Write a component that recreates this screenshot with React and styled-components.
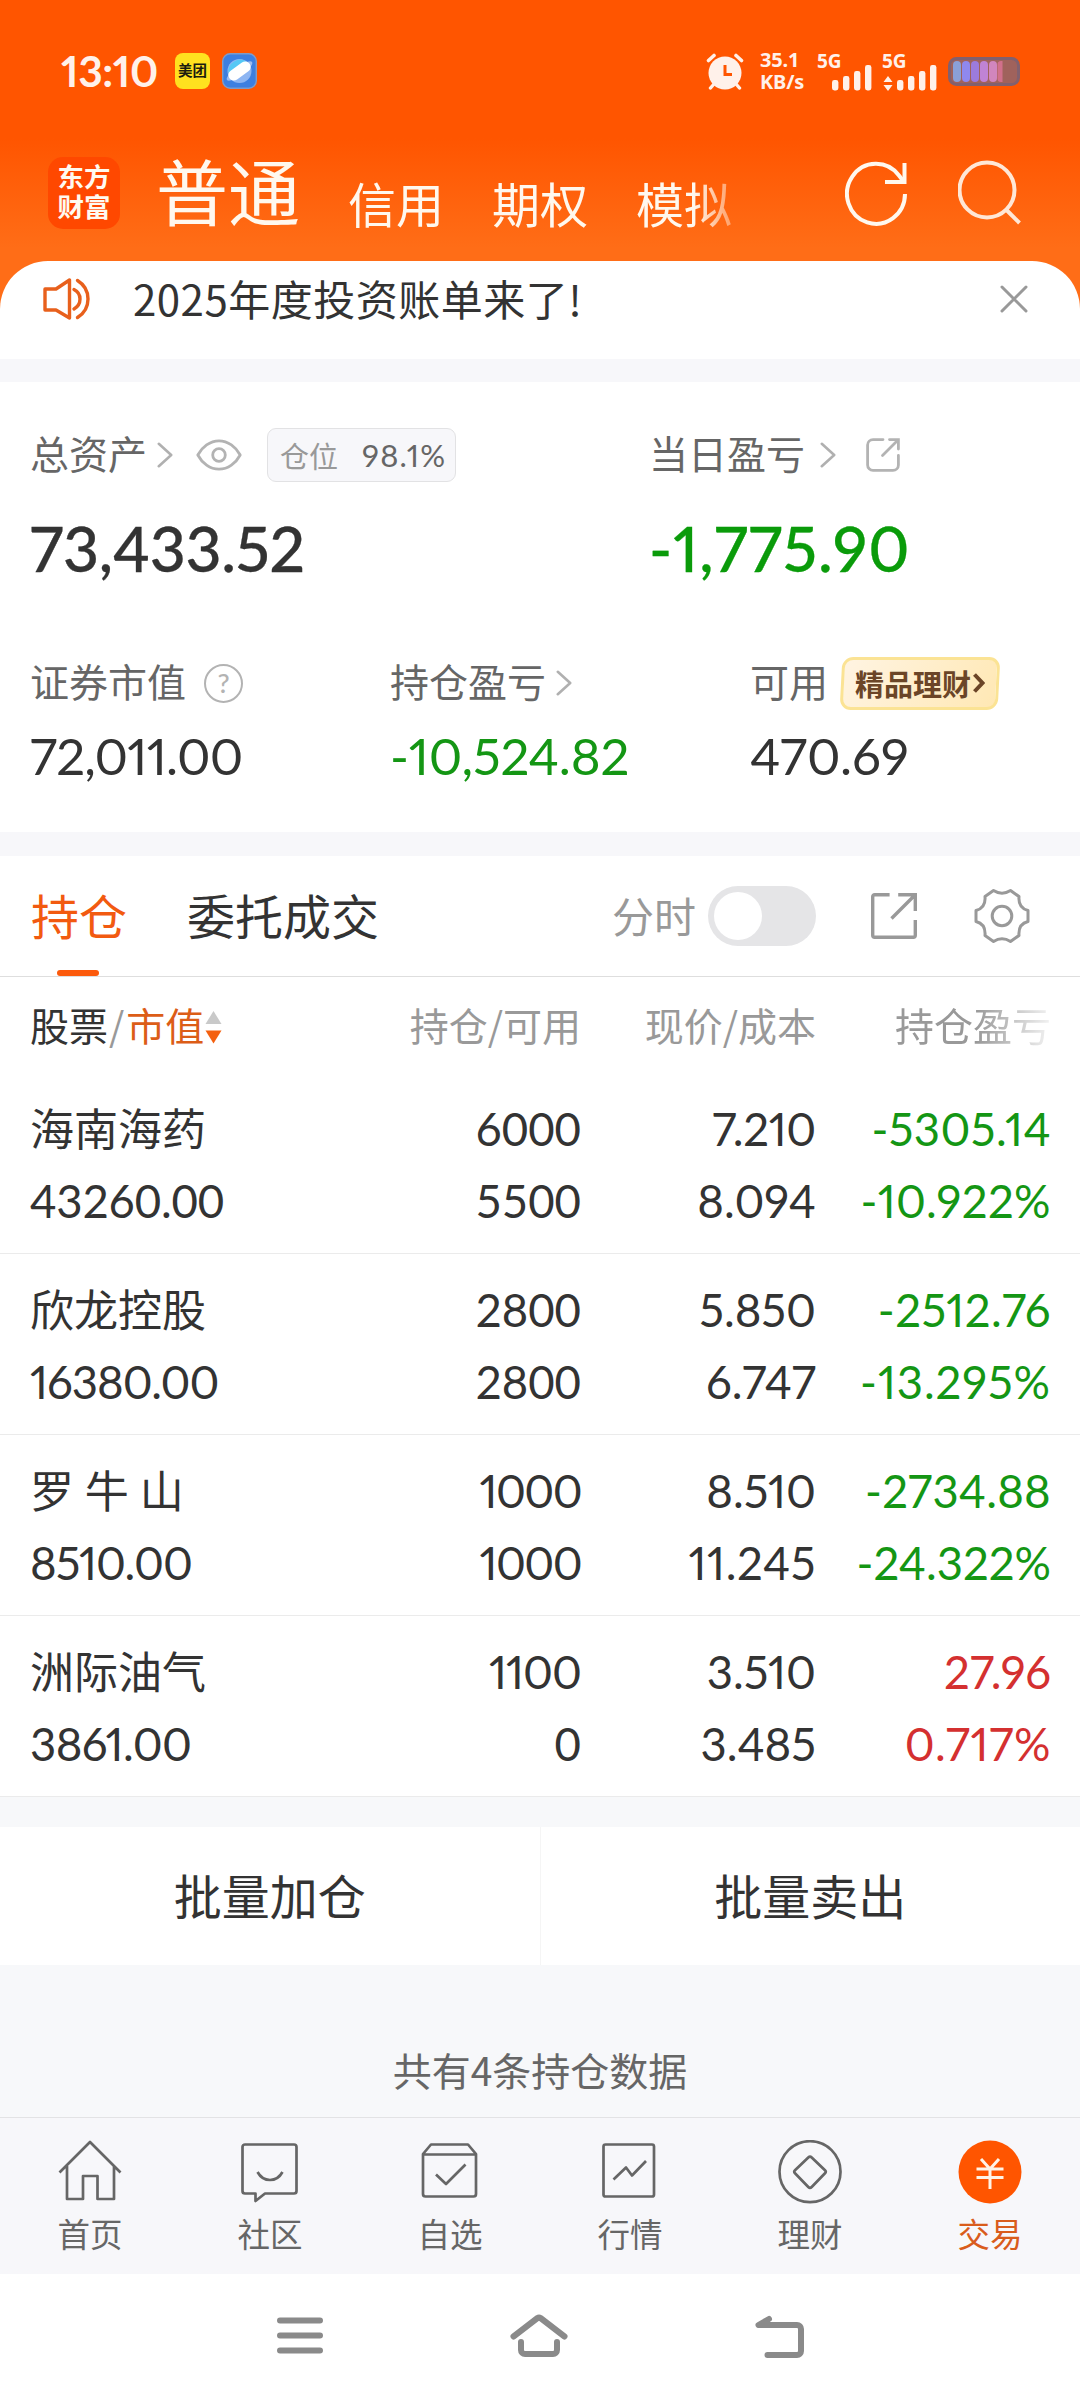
import React from 'react'
import styled, { createGlobalStyle } from 'styled-components'

// track is the letter spacing of the figure, tab switches to equal-width digits
const holdings = [
    {
        name: '海南海药',
        value: { text: '43260.00', tab: true, track: -0.2 },
        amount: { text: '6000', tab: true },
        usable: { text: '5500', tab: true },
        price: { text: '7.210', track: -0.3 },
        cost: { text: '8.094' },
        profit: { text: '-5305.14', track: 0.4 },
        rate: { text: '-10.922%', track: 0.4 },
    },
    {
        name: '欣龙控股',
        value: { text: '16380.00', track: -1 },
        amount: { text: '2800', tab: true },
        usable: { text: '2800', tab: true },
        price: { text: '5.850' },
        cost: { text: '6.747', track: 0.2 },
        profit: { text: '-2512.76', track: 0.5 },
        rate: { text: '-13.295%', track: 0.9 },
    },
    {
        name: '罗 牛 山',
        value: { text: '8510.00', track: -1 },
        amount: { text: '1000', track: -1.6 },
        usable: { text: '1000', track: -1.6 },
        price: { text: '8.510' },
        cost: { text: '11.245', track: 0.6 },
        profit: { text: '-2734.88', track: 0.2 },
        rate: { text: '-24.322%' },
    },
    {
        name: '洲际油气',
        value: { text: '3861.00', track: -0.6 },
        amount: { text: '1100', track: -1 },
        usable: { text: '0', tab: true },
        price: { text: '3.510' },
        cost: { text: '3.485' },
        profit: { text: '27.96' },
        rate: { text: '0.717%', track: 0.6 },
        up: true,
    },
]

const Chevron = () => (
    <svg width="16" height="26" viewBox="0 0 16 26" fill="none" stroke="#b0b0b0" strokeWidth="2.6" strokeLinecap="round" strokeLinejoin="round">
        <path d="M1.8 1.8 14.2 13 1.8 24.2" />
    </svg>
)

const Signal = () => (
    <svg width="40" height="26" viewBox="0 0 40 26" fill="#fff1ea">
        <rect x="0" y="15" width="6.4" height="10.4" rx="2.4" />
        <rect x="11" y="11" width="6.4" height="14.4" rx="2.4" />
        <rect x="22" y="6" width="6.4" height="19.4" rx="2.4" />
        <rect x="33" y="0" width="6.4" height="25.4" rx="2.4" />
    </svg>
)

const icons = {
    home: <path d="M1.5 32.5 32 2 62.5 32.5M9 26V59H25V36H39.5V59H56V26" />,
    community: <path d="M7 4.5H56a2.5 2.5 0 0 1 2.5 2.5V51a2.5 2.5 0 0 1-2.5 2.5H27L17.5 61V53.5H7A2.5 2.5 0 0 1 4.5 51V7A2.5 2.5 0 0 1 7 4.5ZM19.5 32Q24 40 32 40T44.5 32" />,
    watch: <path d="M5 14 13 4.5H50L58 14V54a2.5 2.5 0 0 1-2.5 2.5H7.5A2.5 2.5 0 0 1 5 54ZM5 14.5H58M18 34.5 28 44 47.5 24.5" />,
    market: <path d="M7.5 4.5H54a2 2 0 0 1 2 2V54.5a2 2 0 0 1-2 2H7.5a2 2 0 0 1-2-2V6.5a2 2 0 0 1 2-2ZM15.5 39.5 28 27.5 34 35.5 48 21" />,
    wealth: <path d="M32 1.2A30.5 30.5 0 1 1 32 62.2 30.5 30.5 0 1 1 32 1.2ZM30.3 17.5 17 30.3q-1.5 1.5 0 3L30.3 47q1.7 1.7 3.4 0L47 33.3q1.5-1.5 0-3L33.7 17.5q-1.7-1.7-3.4 0Z" />,
}

const tabs = [
    { label: '首页', icon: 'home' },
    { label: '社区', icon: 'community' },
    { label: '自选', icon: 'watch' },
    { label: '行情', icon: 'market' },
    { label: '理财', icon: 'wealth' },
    { label: '交易', active: true },
]

function StatusBar() {
    return (
        <Status>
            <Clock>13:10</Clock>
            <MeituanIcon>美团</MeituanIcon>
            <svg width="35" height="36" viewBox="0 0 35 36">
                <rect x=".7" y=".7" width="33.6" height="34.6" rx="7.5" fill="#3d7fe0" stroke="#7d9ccb" strokeWidth="1.4" />
                <circle cx="17.5" cy="18" r="12" fill="#8db5f2" />
                <path d="M6.5 20A11.7 11.7 0 0 1 25 9Z" fill="#55c8f5" />
                <ellipse cx="17.5" cy="18" rx="15.5" ry="4.5" fill="#9dbcf0" transform="rotate(-36 17.5 18)" />
                <rect x="5" y="12.5" width="25" height="11" rx="5.5" fill="#fff" transform="rotate(-36 17.5 18)" />
            </svg>
            <StatusRight>
                <svg width="38" height="37" viewBox="0 0 38 37" fill="none" stroke="#fff1ea" strokeLinecap="round">
                    <circle cx="19" cy="20" r="16.5" fill="#fff1ea" stroke="none" />
                    <path d="M2.5 7.5 8 2.5M35.5 7.5 30 2.5" strokeWidth="3.6" />
                    <path d="M8 31 4.5 35M30 31 33.5 35" strokeWidth="3.4" />
                    <path d="M19 12V21.5H26" stroke="#ff5500" strokeWidth="3" strokeLinecap="butt" />
                </svg>
                <Speed>
                    <span>35.1</span>
                    <span>KB/s</span>
                </Speed>
                <Network>
                    <NetLabel>5G</NetLabel>
                    <Signal />
                </Network>
                <Network>
                    <NetLabel>5G</NetLabel>
                    <UpDown width="10" height="15" viewBox="0 0 10 15" fill="#fff1ea">
                        <path d="M5 0 9.5 6H.5ZM5 15 9.5 9H.5Z" />
                    </UpDown>
                    <Signal />
                </Network>
                <svg width="72" height="29" viewBox="0 0 72 29">
                    <rect x="1.5" y="1.5" width="69" height="26" rx="7" fill="#a0625c" stroke="#82606e" strokeWidth="3" />
                    <rect x="5" y="4" width="8" height="21" rx="4" fill="#8aa0d8" />
                    <rect x="14" y="4" width="8" height="21" rx="4" fill="#8f88ee" />
                    <rect x="23" y="4" width="8" height="21" rx="4" fill="#9c7bdc" />
                    <rect x="32" y="4" width="8" height="21" rx="4" fill="#c083d4" />
                    <rect x="41" y="4" width="8" height="21" rx="4" fill="#d186bd" />
                    <path d="M54.5 4V25H53a3.5 3.5 0 0 1-3.5-3.5V7.5A3.5 3.5 0 0 1 53 4Z" fill="#d1708b" />
                </svg>
            </StatusRight>
        </Status>
    )
}

function BrandBar() {
    return (
        <Brand>
            <Logo>
                <span>东方</span>
                <span>财富</span>
            </Logo>
            <Accounts>
                <Account $current>普通</Account>
                <Account>信用</Account>
                <Account>期权</Account>
                <Account>模拟</Account>
            </Accounts>
            <svg width="64" height="66" viewBox="0 0 64 66" fill="none" stroke="#fff8ee" strokeWidth="4">
                <path d="M60 34A29 30 0 1 1 54 15.5L59 22" />
                <path d="M59.5 3V22H40" />
            </svg>
            <SearchIcon width="64" height="66" viewBox="0 0 64 66" fill="none" stroke="#ffe7d6" strokeWidth="4">
                <circle cx="29" cy="30" r="27.5" />
                <path d="M48 49.5 61.5 63" />
            </SearchIcon>
        </Brand>
    )
}

function Summary() {
    return (
        <SummaryPanel>
            <TopFigures>
                <Figure>
                    <FigureHead>
                        <Label>总资产</Label>
                        <Gap $w={10} />
                        <Chevron />
                        <Gap $w={23} />
                        <svg width="46" height="32" viewBox="0 0 46 32" fill="none" stroke="#b3b3b3" strokeWidth="2.8">
                            <path d="M1.8 16C6 8 14 1.8 23 1.8S40 8 44.2 16C40 24 32 30.2 23 30.2S6 24 1.8 16Z" strokeLinejoin="round" />
                            <circle cx="23" cy="16" r="6.3" />
                        </svg>
                        <Position>
                            仓位<Num $size={31} $track={1.2}>98.1%</Num>
                        </Position>
                    </FigureHead>
                    <Total $color="#333" $track={-0.3}>73,433.52</Total>
                </Figure>
                <Figure>
                    <FigureHead>
                        <Label>当日盈亏</Label>
                        <Gap $w={15} />
                        <Chevron />
                        <Gap $w={30} />
                        <svg width="34" height="34" viewBox="0 0 34 34" fill="none" stroke="#b3b3b3" strokeWidth="2.8" strokeLinecap="round">
                            <path d="M17 1.6H7a5.4 5.4 0 0 0-5.4 5.4V27A5.4 5.4 0 0 0 7 32.4H27a5.4 5.4 0 0 0 5.4-5.4V17.5" />
                            <path d="M23.5 1.6H32.4V11M32 2 16.5 17.5" />
                        </svg>
                    </FigureHead>
                    <Total $color="#0a9b0a" $track={1}>-1,775.90</Total>
                </Figure>
            </TopFigures>
            <SubFigures>
                <Figure>
                    <FigureHead>
                        <Label>证券市值</Label>
                        <Gap $w={18} />
                        <Help>?</Help>
                    </FigureHead>
                    <Num $size={51} $color="#333" $track={-0.8}>72,011.00</Num>
                </Figure>
                <Figure>
                    <FigureHead>
                        <Label>持仓盈亏</Label>
                        <Gap $w={10} />
                        <Chevron />
                    </FigureHead>
                    <Num $size={51} $color="#149614" $track={-0.2}>-10,524.82</Num>
                </Figure>
                <Figure>
                    <FigureHead>
                        <Label>可用</Label>
                        <Promo>
                            精品理财
                            <svg width="12" height="20" viewBox="0 0 12 20" fill="none" stroke="#6b4527" strokeWidth="4">
                                <path d="M1.5 1.5 9.5 10 1.5 18.5" />
                            </svg>
                        </Promo>
                    </FigureHead>
                    <Num $size={51} $color="#333">470.69</Num>
                </Figure>
            </SubFigures>
        </SummaryPanel>
    )
}

function Pair({ top, bottom }) {
    return [top, bottom].map((n, i) => (
        <Num key={i} $size={45.5} $tab={n.tab} $track={n.track}>{n.text}</Num>
    ))
}

function Positions() {
    return (
        <div>
            <TabBar>
                <Tab $active>持仓</Tab>
                <Tab>委托成交</Tab>
                <TimeShare>分时</TimeShare>
                <Toggle />
                <svg width="46" height="46" viewBox="0 0 46 46" fill="none" stroke="#999" strokeWidth="3.4">
                    <path d="M18.6 1.7H3.7a2 2 0 0 0-2 2V42.3a2 2 0 0 0 2 2H42.3a2 2 0 0 0 2-2V27M27.2 1.7H44.3V18M44 2 20.5 25.5" />
                </svg>
                <GearIcon width="56" height="56" viewBox="-28 -28 56 56" fill="none" stroke="#999" strokeWidth="3">
                    <path d="M-17-19.5-8.5-25.5Q0-20 8.5-25.5L17-19.5Q16-8 26-5.5V5.5Q16 8 17 19.5L8.5 25.5Q0 20-8.5 25.5L-17 19.5Q-16 8-26 5.5V-5.5Q-16-8-17-19.5Z" strokeLinejoin="round" />
                    <circle r="9.8" />
                </GearIcon>
            </TabBar>
            <HeadRow>
                <HeadCell>
                    <b>股票</b>/<em>市值</em>
                    <svg width="17" height="34" viewBox="0 0 17 34">
                        <path d="M8.5 1 16.5 14H.5Z" fill="#c9c9c9" />
                        <path d="M.5 20.5H16.5L8.5 33.5Z" fill="#f4600f" />
                    </svg>
                </HeadCell>
                <HeadCell>持仓/可用</HeadCell>
                <HeadCell>现价/成本</HeadCell>
                <HeadCell $fade>持仓盈亏</HeadCell>
            </HeadRow>
            {holdings.map((h) => (
                <Row key={h.name}>
                    <Cell>
                        <StockName>{h.name}</StockName>
                        <Num $size={45.5} $tab={h.value.tab} $track={h.value.track}>{h.value.text}</Num>
                    </Cell>
                    <Cell>
                        <Pair top={h.amount} bottom={h.usable} />
                    </Cell>
                    <Cell>
                        <Pair top={h.price} bottom={h.cost} />
                    </Cell>
                    <Cell $color={h.up ? '#d43030' : '#149614'}>
                        <Pair top={h.profit} bottom={h.rate} />
                    </Cell>
                </Row>
            ))}
        </div>
    )
}

function App() {
    return (
        <Page>
            <GlobalStyle />
            <Top>
                <StatusBar />
                <BrandBar />
                <Notice>
                    <svg width="47" height="42" viewBox="0 0 47 42" fill="none" stroke="#e8601c" strokeWidth="3.4" strokeLinecap="round" strokeLinejoin="round">
                        <path d="M2 11H13L26.5 2V40L13 32H2Z" />
                        <path d="M31 11.5Q37 14.5 37 21T31 31M34.5 2.5Q45 9 45 21T34.5 39.5" />
                    </svg>
                    <NoticeText>2025年度投资账单来了!</NoticeText>
                    <svg width="28" height="28" viewBox="0 0 28 28" stroke="#999" strokeWidth="3" strokeLinecap="round">
                        <path d="M2 2 26 26M26 2 2 26" />
                    </svg>
                </Notice>
            </Top>
            <Summary />
            <Positions />
            <Actions>
                <Action>批量加仓</Action>
                <Action>批量卖出</Action>
            </Actions>
            <CountNote>共有4条持仓数据</CountNote>
            <BottomNav>
                {tabs.map((t) => (
                    <NavItem key={t.label} $active={t.active}>
                        {t.active ? (
                            <svg width="64" height="64" viewBox="0 0 64 64" fill="none">
                                <circle cx="32" cy="32" r="31.5" fill="#ff5500" />
                                <path d="M23 19 32 29 41 19M18.5 29H45.5M18.5 37.5H45.5M32 28V49" stroke="#fff3e6" strokeWidth="3" />
                            </svg>
                        ) : (
                            <svg width="64" height="64" viewBox="0 0 64 64" fill="none" stroke="#666" strokeWidth="2.7" strokeLinejoin="round">
                                {icons[t.icon]}
                            </svg>
                        )}
                        <span>{t.label}</span>
                    </NavItem>
                ))}
            </BottomNav>
            <SystemBar>
                <svg width="46" height="37" viewBox="0 0 46 37">
                    <path d="M3 3.5H43M3 18.5H43M3 33.5H43" />
                </svg>
                <svg width="58" height="44" viewBox="0 0 58 44">
                    <path d="M3.5 22.5 27.5 4q1.5-1 3 0L54.5 22.5M11 28V36a4 4 0 0 0 4 4H43a4 4 0 0 0 4-4V28" />
                </svg>
                <svg width="50" height="44" viewBox="0 0 50 44">
                    <path d="M14 5 3.500 11H42a4 4 0 0 1 4 4V37a4 4 0 0 1-4 4H12.500" />
                </svg>
            </SystemBar>
        </Page>
    )
}

export default App

const GlobalStyle = createGlobalStyle`
    * {
        box-sizing: border-box;
    }

    body {
        margin: 0;
        background: #fff;
        font-family: "Noto Sans CJK SC", sans-serif;
        color: #333;
    }

    svg {
        display: block;
        flex: none;
    }
`

const Page = styled.div`
    width: 1080px;
    height: 2400px;
    overflow: hidden;
    background: #f7f8fa;
    white-space: nowrap;
`

const Top = styled.header`
    height: 359px;
    background: linear-gradient(#ff5500 138px, #ff6d17 248px);
`

const Status = styled.div`
    height: 142px;
    padding-left: 61px;
    display: flex;
    align-items: center;
    color: #fff1ea;
`

const Clock = styled.div`
    width: 114px;
    font: 700 42.5px/60px Lato, sans-serif;
    font-variant-numeric: proportional-nums;
    letter-spacing: -0.4px;
`

const MeituanIcon = styled.div`
    width: 35px;
    height: 36px;
    margin-right: 12px;
    border-radius: 8px;
    background: #ffe11f;
    color: #1c1c10;
    font-size: 14.5px;
    font-weight: 700;
    line-height: 34px;
    text-align: center;
`

const StatusRight = styled.div`
    display: flex;
    align-items: center;
    margin-left: auto;
    padding-right: 60px;
`

const Speed = styled.div`
    width: 58px;
    margin-left: 16px;
    display: flex;
    flex-direction: column;
    font: 700 20px/22px "Noto Sans", sans-serif;
    letter-spacing: -0.2px;
`

const Network = styled.div`
    position: relative;
    width: 65px;
    height: 38px;
    padding: 13px 0 0 14px;
`

// overlaps the short signal bars
const NetLabel = styled.span`
    position: absolute;
    left: -1px;
    top: -1px;
    font: 700 19px/20px "Noto Sans", sans-serif;
`

const UpDown = styled.svg`
    position: absolute;
    left: 0;
    top: 24px;
`

const Brand = styled.div`
    height: 119px;
    padding: 0 0 17px 48px;
    display: flex;
    align-items: center;
`

const Logo = styled.div`
    width: 72px;
    height: 72px;
    margin-right: 36px;
    padding-top: 4px;
    display: flex;
    flex-direction: column;
    align-items: center;
    border-radius: 15px;
    background: #ff4800;
    color: #fffaf0;
    font-size: 26.5px;
    font-weight: 700;
    line-height: 30px;
`

const Accounts = styled.div`
    width: 689px;
    display: flex;
    align-items: center;
    gap: 48px;
    mask-image: linear-gradient(to right, #000 538px, transparent 600px);
`

const Account = styled.div`
    margin-top: ${props => props.$current ? '-9px' : '17px'};
    color: #fff8ee;
    font-size: ${props => props.$current ? '72px' : '48px'};
    line-height: 90px;
`

const SearchIcon = styled.svg`
    margin-left: 49px;
`

const Notice = styled.div`
    height: 98px;
    padding: 0 52px 22px 43px;
    display: flex;
    align-items: center;
    border-radius: 48px 48px 0 0;
    background: #fff;
`

const NoticeText = styled.div`
    flex: 1;
    margin-top: -2px;
    padding-left: 43px;
    font-size: 42px;
    letter-spacing: 0.5px;
    line-height: 60px;
`

const SummaryPanel = styled.section`
    height: 497px;
    border: solid #f7f7fa;
    border-width: 23px 0 24px;
    background: #fff;
`

const Figure = styled.div`
    display: flex;
    flex-direction: column;
`

const TopFigures = styled.div`
    height: 228px;
    padding: 43px 0 0 30px;
    display: grid;
    grid-template-columns: 619px 1fr;

    ${Figure} {
        gap: 33px;
    }
`

const SubFigures = styled.div`
    padding: 43px 0 0 30px;
    display: grid;
    grid-template-columns: 360px 360px 1fr;

    ${Figure} {
        gap: 13px;
    }
`

const FigureHead = styled.div`
    height: 60px;
    display: flex;
    align-items: center;
`

const Label = styled.span`
    margin-top: -6px;
    color: #666;
    font-size: 39px;
    line-height: 50px;
`

const Gap = styled.i`
    width: ${props => props.$w}px;
`

const Num = styled.span`
    color: ${props => props.$color || 'inherit'};
    font-family: Lato, sans-serif;
    font-size: ${props => props.$size}px;
    font-variant-numeric: ${props => props.$tab ? 'tabular-nums' : 'proportional-nums'};
    letter-spacing: ${props => props.$track || 0}px;
    line-height: 60px;
`

// slightly heavier than the other figures
const Total = styled(Num)`
    font-size: 62.5px;
    font-weight: 500;
    -webkit-text-stroke: 0.3px currentColor;
`

const Position = styled.div`
    width: 189px;
    height: 54px;
    margin-left: 25px;
    padding-left: 12px;
    display: flex;
    align-items: center;
    gap: 24px;
    border: 1px solid #e2e2e4;
    border-radius: 9px;
    background: #f7f7fa;
    color: #999;
    font-size: 29px;
    line-height: 48px;

    ${Num} {
        color: #666;
    }
`

const Help = styled.div`
    width: 39px;
    height: 39px;
    border: 2.5px solid #b3b3b3;
    border-radius: 50%;
    color: #b3b3b3;
    font: 500 27px/34px Lato, sans-serif;
    text-align: center;
`

const Promo = styled.div`
    position: relative;
    z-index: 0;
    height: 53px;
    margin-left: 13px;
    padding: 0 14px;
    display: flex;
    align-items: center;
    gap: 2px;
    color: #6b4527;
    font-size: 29px;
    font-weight: 700;
    line-height: 50px;

    &::before {
        content: "";
        position: absolute;
        inset: 0;
        z-index: -1;
        border: 3px solid #fbe394;
        border-radius: 11px;
        background: linear-gradient(120deg, #fff4e2, #ffe8b4);
        transform: skewX(-3deg);
    }
`

const TabBar = styled.div`
    height: 121px;
    padding: 0 50px 0 31px;
    display: flex;
    align-items: center;
    border-bottom: 1px solid #dedede;
    background: #fff;
`

const Tab = styled.div`
    height: 120px;
    margin-right: 60px;
    padding-top: 2px;
    display: flex;
    flex-direction: column;
    align-items: center;
    color: ${props => props.$active ? '#f25a10' : '#333'};
    font-size: 48px;
    line-height: 112px;

    &::after {
        content: "";
        width: 42px;
        height: 6px;
        margin-right: 2px;
        border-radius: 3px;
        background: ${props => props.$active ? '#fc5a0c' : 'transparent'};
    }
`

const TimeShare = styled.div`
    margin: -4px 12px 0 auto;
    color: #999;
    font-size: 42px;
`

const Toggle = styled.div`
    width: 108px;
    height: 60px;
    margin-right: 55px;
    padding: 6px;
    border-radius: 30px;
    background: #e5e5e7;

    &::before {
        content: "";
        display: block;
        width: 48px;
        height: 48px;
        border-radius: 50%;
        background: #fff;
    }
`

const GearIcon = styled.svg`
    margin-left: 57px;
`

const Row = styled.div`
    height: 181px;
    padding: 25px 29px 0 30px;
    display: grid;
    grid-template-columns: 272px 279px 235px 235px;
    border-bottom: 1px solid #ebebeb;
    background: #fff;
`

const HeadRow = styled(Row)`
    height: 96px;
    padding-top: 18px;
    border: 0;
`

const HeadCell = styled.div`
    display: flex;
    justify-content: flex-end;
    color: #999;
    font-size: 39px;
    line-height: 58px;
    mask-image: ${props => props.$fade ? 'linear-gradient(to right, #000 160px, transparent 245px)' : 'none'};

    &:first-child {
        justify-content: flex-start;
    }

    b {
        margin-right: 1px;
        color: #333;
        font-weight: 400;
    }

    em {
        margin-left: 2px;
        color: #dc5d17;
        font-style: normal;
    }

    svg {
        margin: 15px 0 0 1px;
    }
`

const Cell = styled.div`
    display: flex;
    flex-direction: column;
    align-items: flex-end;
    gap: 10px;
    color: ${props => props.$color || '#333'};

    &:first-child {
        align-items: flex-start;
    }

    ${Num} {
        line-height: 62px;
    }
`

const StockName = styled.div`
    height: 62px;
    font-size: 44px;
    line-height: 58px;
    word-spacing: 1px;
`

const Actions = styled.div`
    height: 138px;
    margin-top: 30px;
    display: flex;
    background: #fff;
`

const Action = styled.div`
    flex: 1;
    font-size: 48px;
    line-height: 135px;
    text-align: center;

    & + & {
        border-left: 1px solid #f5f5f5;
    }
`

const CountNote = styled.div`
    height: 152px;
    padding-top: 75px;
    color: #666;
    font-size: 39px;
    line-height: 58px;
    text-align: center;
`

const BottomNav = styled.nav`
    height: 157px;
    padding-top: 22px;
    display: grid;
    grid-template-columns: repeat(6, 1fr);
    border-top: 1px solid #e3e3e5;
    background: #f7f7fa;
`

const NavItem = styled.div`
    display: flex;
    flex-direction: column;
    align-items: center;
    gap: 9px;
    color: ${props => props.$active ? '#d95c1c' : '#666'};
    font-size: 32.5px;
    line-height: 40px;
`

const SystemBar = styled.div`
    height: 126px;
    padding: 0 275px 3px 277px;
    display: flex;
    align-items: center;
    justify-content: space-between;
    background: #fff;

    path {
        fill: none;
        stroke: #8a8a8a;
        stroke-width: 6;
        stroke-linecap: round;
        stroke-linejoin: round;
    }
`
